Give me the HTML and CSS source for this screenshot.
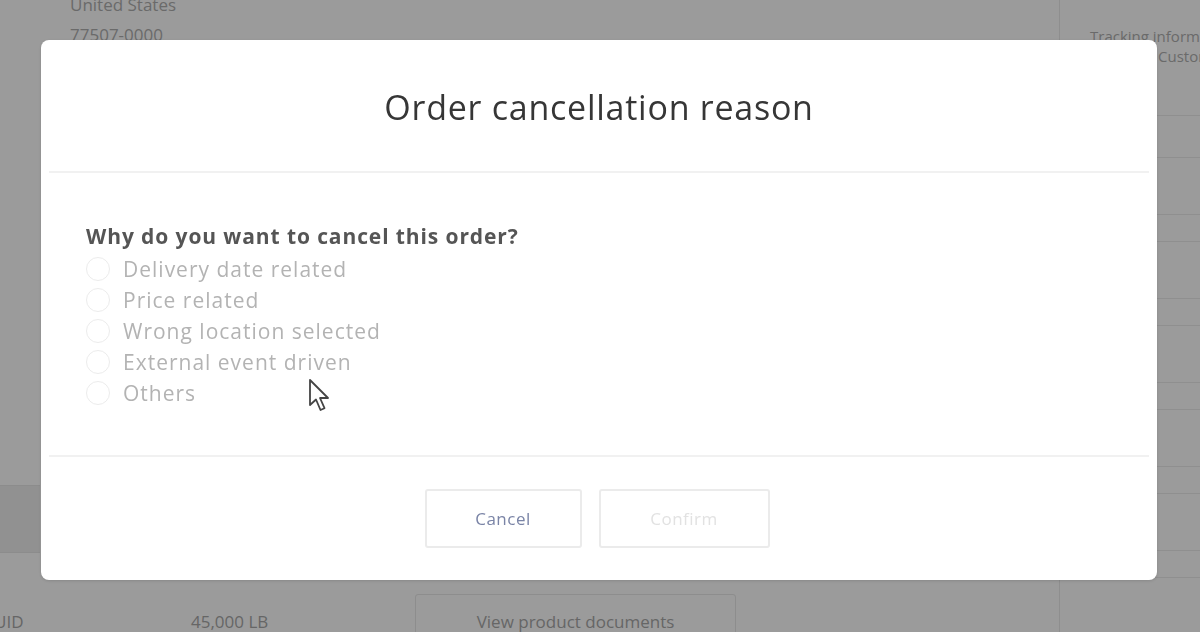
FILE: index.html
```html
<!DOCTYPE html>
<html lang="en">
<head>
<meta charset="utf-8">
<title>Order cancellation reason</title>
<link rel="stylesheet" href="styles.css">
</head>
<body>
<div class="page">
  <div class="main">
    <div class="address">
      <div>United States</div>
      <div>77507-0000</div>
    </div>
    <div class="band"></div>
    <div class="item-row">
      <span class="cell-uid">UID</span>
      <span class="cell-weight">45,000 LB</span>
      <span class="docs-btn">View product documents</span>
    </div>
  </div>
  <aside class="side">
    <div class="side-head">
      <div>Tracking information</div>
      <div class="side-sub">Customer</div>
    </div>
    <div class="side-row gap"></div>
    <div class="side-row tall"></div>
    <div class="side-row short"></div>
    <div class="side-row tall"></div>
    <div class="side-row short"></div>
    <div class="side-row tall"></div>
    <div class="side-row short"></div>
    <div class="side-row tall"></div>
    <div class="side-row short"></div>
    <div class="side-row tall"></div>
    <div class="side-row short"></div>
  </aside>
</div>

<div class="modal" role="dialog">
  <header class="modal-head">
    <h1 class="modal-title">Order cancellation reason</h1>
  </header>
  <section class="modal-body">
    <p class="question">Why do you want to cancel this order?</p>
    <ul class="options">
      <li class="option"><span class="radio"></span><span>Delivery date related</span></li>
      <li class="option"><span class="radio"></span><span>Price related</span></li>
      <li class="option"><span class="radio"></span><span>Wrong location selected</span></li>
      <li class="option"><span class="radio"></span><span>External event driven</span></li>
      <li class="option"><span class="radio"></span><span>Others</span></li>
    </ul>
  </section>
  <footer class="modal-foot">
    <button class="btn btn-cancel">Cancel</button>
    <button class="btn btn-confirm">Confirm</button>
  </footer>
</div>

<svg class="cursor" width="24" height="36" viewBox="0 0 24 36" xmlns="http://www.w3.org/2000/svg">
  <path d="M2 2 L2 27 L8 21.5 L12.5 32 L16.5 30.2 L12 20 L20 20 Z" fill="#ffffff" stroke="#444" stroke-width="1.8" stroke-linejoin="round"/>
</svg>
</body>
</html>
```

FILE: styles.css
```css
* { box-sizing: border-box; }

html, body {
  margin: 0;
  padding: 0;
}

body {
  width: 1200px;
  height: 632px;
  overflow: hidden;
  background: #9b9b9b;
  font-family: "Open Sans", "Lato", sans-serif;
  color: #6a6a6a;
}

.page {
  display: grid;
  grid-template-columns: 1059px 1fr;
  height: 632px;
  overflow: hidden;
}

.main {
  display: flex;
  flex-direction: column;
}

.address {
  padding-left: 70px;
  margin-top: -10px;
  font-size: 17px;
  line-height: 30px;
  color: #6a6a6a;
}

.band {
  margin-top: 435px;
  width: 40px;
  height: 68px;
  background: #919191;
  border-top: 1px solid #8c8c8c;
  border-bottom: 1px solid #8c8c8c;
}

.item-row {
  margin-top: 41px;
  display: flex;
  align-items: flex-start;
  font-size: 17px;
  color: #666;
}

.cell-uid {
  margin-left: -6px;
  margin-top: 16px;
  width: 197px;
}

.cell-weight {
  margin-top: 16px;
  width: 224px;
}

.docs-btn {
  width: 321px;
  height: 50px;
  border: 1px solid #8d8d8d;
  border-radius: 3px;
  padding-top: 15px;
  text-align: center;
}

.side {
  border-left: 1px solid #8e8e8e;
  display: flex;
  flex-direction: column;
}

.side-head {
  flex: none;
  padding: 26px 0 0 30px;
  font-size: 15px;
  line-height: 20px;
  color: #6a6a6a;
  white-space: nowrap;
  height: 116px;
  border-bottom: 1px solid #8f8f8f;
}

.side-sub {
  padding-left: 68px;
}

.side-row {
  flex: none;
  border-bottom: 1px solid #8f8f8f;
}

.side-row.gap { height: 42px; }
.side-row.tall { height: 57px; }
.side-row.short { height: 27px; }

/* Modal */
.modal {
  position: fixed;
  left: 41px;
  top: 40px;
  width: 1116px;
  height: 540px;
  background: #ffffff;
  border-radius: 8px;
  display: flex;
  flex-direction: column;
  box-shadow: 0 1px 3px rgba(0,0,0,0.12);
}

.modal-head {
  height: 133px;
  display: flex;
  align-items: center;
  justify-content: center;
  margin: 0 8px;
  border-bottom: 2px solid #f1f1f1;
}

.modal-title {
  margin: 2px 0 0;
  font-size: 34px;
  font-weight: 500;
  color: #363636;
  letter-spacing: 0.75px;
}

.modal-body {
  height: 284px;
  padding: 50px 0 0 37px;
  margin: 0 8px;
  border-bottom: 2px solid #f1f1f1;
}

.question {
  margin: 0 0 4px;
  font-size: 21px;
  font-weight: 700;
  color: #555555;
  line-height: 26px;
  letter-spacing: 0.9px;
}

.options {
  list-style: none;
  margin: 0;
  padding: 0;
}

.option {
  display: flex;
  align-items: center;
  gap: 13px;
  height: 31px;
  font-size: 21px;
  color: #b3b3b3;
  letter-spacing: 1px;
}

.radio {
  width: 24px;
  height: 24px;
  border-radius: 50%;
  border: 1.5px solid #ececec;
}

.modal-foot {
  flex: 1;
  display: flex;
  align-items: center;
  justify-content: center;
  gap: 17px;
  padding: 0 4px 0 0;
}

.btn {
  height: 59px;
  background: #ffffff;
  border: 2px solid #ebebeb;
  border-radius: 3px;
  font-family: "Open Sans", "Lato", sans-serif;
  font-size: 17px;
  letter-spacing: 0.5px;
}

.btn-cancel {
  width: 157px;
  color: #7a84a6;
}

.btn-confirm {
  width: 171px;
  color: #e2e2e2;
}

.cursor {
  position: fixed;
  left: 308px;
  top: 378px;
}
```
